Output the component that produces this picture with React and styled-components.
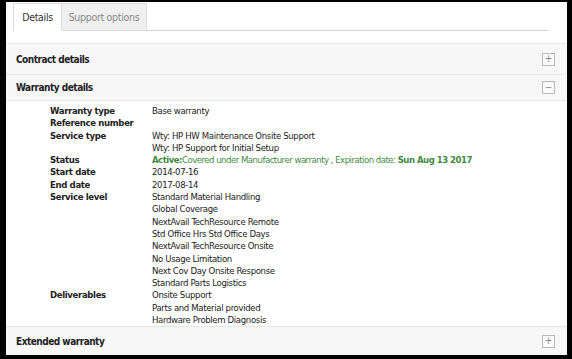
import React from "react"
import styled, { createGlobalStyle } from "styled-components"

const Global = createGlobalStyle`
  *, *::before, *::after {
    box-sizing: border-box;
  }
  html, body {
    margin: 0;
    padding: 0;
    background: #000000;
  }
  body {
    font-family: "Liberation Sans Narrow", "DejaVu Sans Condensed", sans-serif;
  }
`

const Page = styled.div`
  margin: 2px 5px 0 6px;
  height: 353px;
  background: #ffffff;
  display: flex;
  flex-direction: column;
  overflow: hidden;
  & > * {
    flex-shrink: 0;
  }
`

const Tabs = styled.ul`
  display: flex;
  margin: 1px 18px 0 7px;
  padding: 0;
  list-style: none;
  border-bottom: 1px solid #d6d6d6;
  height: 28px;
`

const Tab = styled.li`
  width: ${({ $w }) => $w}px;
  margin-bottom: -1px;
  display: flex;
  align-items: center;
  justify-content: center;
  font-size: 10.5px;
  letter-spacing: -0.3px;
  border: 1px solid #dcdcdc;
  border-left-width: ${({ $first }) => ($first ? 1 : 0)}px;
  ${({ $active }) => ($active ? `
    background: #ffffff;
    color: #333333;
    border-bottom-color: #ffffff;
  ` : `
    background: #efefef;
    color: #8a8a8a;
  `)}
`

const Sections = styled.div`
  margin-top: 12px;
  flex: 1;
  display: flex;
  flex-direction: column;
  & > * {
    flex-shrink: 0;
  }
`

const Header = styled.div`
  display: flex;
  align-items: center;
  justify-content: space-between;
  height: ${({ $h }) => $h}px;
  padding: 0 12px 0 10px;
  background: #f7f7f7;
  border-top: 1px solid #e6e6e6;
  font-size: 10px;
  letter-spacing: -0.5px;
  font-weight: bold;
  color: #222222;
`

const Toggle = styled.span`
  width: 13px;
  height: 13px;
  border: 1px solid #b8b8b8;
  background: #fbfbfb;
  color: #888888;
  font-size: 10px;
  font-weight: normal;
  line-height: 10px;
  letter-spacing: 0;
  display: flex;
  align-items: center;
  justify-content: center;
`

const Body = styled.div`
  padding: 4px 0 0 44px;
  height: 226px;
  border-top: 1px solid #e6e6e6;
`

const Grid = styled.dl`
  margin: 0;
  display: grid;
  grid-template-columns: 102px 1fr;
  font-size: 9.5px;
  letter-spacing: -0.35px;
  line-height: 12.3px;
  color: #222222;
`

const Term = styled.dt`
  font-weight: bold;
  grid-column: 1;
  grid-row: span ${({ $span }) => $span};
`

const Value = styled.dd`
  margin: 0;
  grid-column: 2;
`

const Status = styled(Value)`
  color: #3f8a3f;
  letter-spacing: -0.5px;
  white-space: nowrap;
`

const rows = [
  ["Warranty type", ["Base warranty"]],
  ["Reference number", [""]],
  ["Service type", ["Wty: HP HW Maintenance Onsite Support", "Wty: HP Support for Initial Setup"]],
  ["Status", null],
  ["Start date", ["2014-07-16"]],
  ["End date", ["2017-08-14"]],
  ["Service level", [
    "Standard Material Handling",
    "Global Coverage",
    "NextAvail TechResource Remote",
    "Std Office Hrs Std Office Days",
    "NextAvail TechResource Onsite",
    "No Usage Limitation",
    "Next Cov Day Onsite Response",
    "Standard Parts Logistics",
  ]],
  ["Deliverables", ["Onsite Support", "Parts and Material provided", "Hardware Problem Diagnosis"]],
]

export default function App() {
  return (
    <Page>
      <Global />
      <Tabs>
        <Tab $w={49} $first $active>Details</Tab>
        <Tab $w={85}>Support options</Tab>
      </Tabs>
      <Sections>
        <Header $h={31}>
          Contract details
          <Toggle>+</Toggle>
        </Header>
        <Header $h={26}>
          Warranty details
          <Toggle>−</Toggle>
        </Header>
        <Body>
          <Grid>
            {rows.map(([term, values]) => (
              <React.Fragment key={term}>
                <Term $span={values ? values.length : 1}>{term}</Term>
                {values ? (
                  values.map((v, i) => <Value key={i}>{v || "\u00a0"}</Value>)
                ) : (
                  <Status>
                    <b>Active:</b>Covered under Manufacturer warranty , Expiration date: <b>Sun Aug 13 2017</b>
                  </Status>
                )}
              </React.Fragment>
            ))}
          </Grid>
        </Body>
        <Header $h={29}>
          Extended warranty
          <Toggle>+</Toggle>
        </Header>
      </Sections>
    </Page>
  )
}
